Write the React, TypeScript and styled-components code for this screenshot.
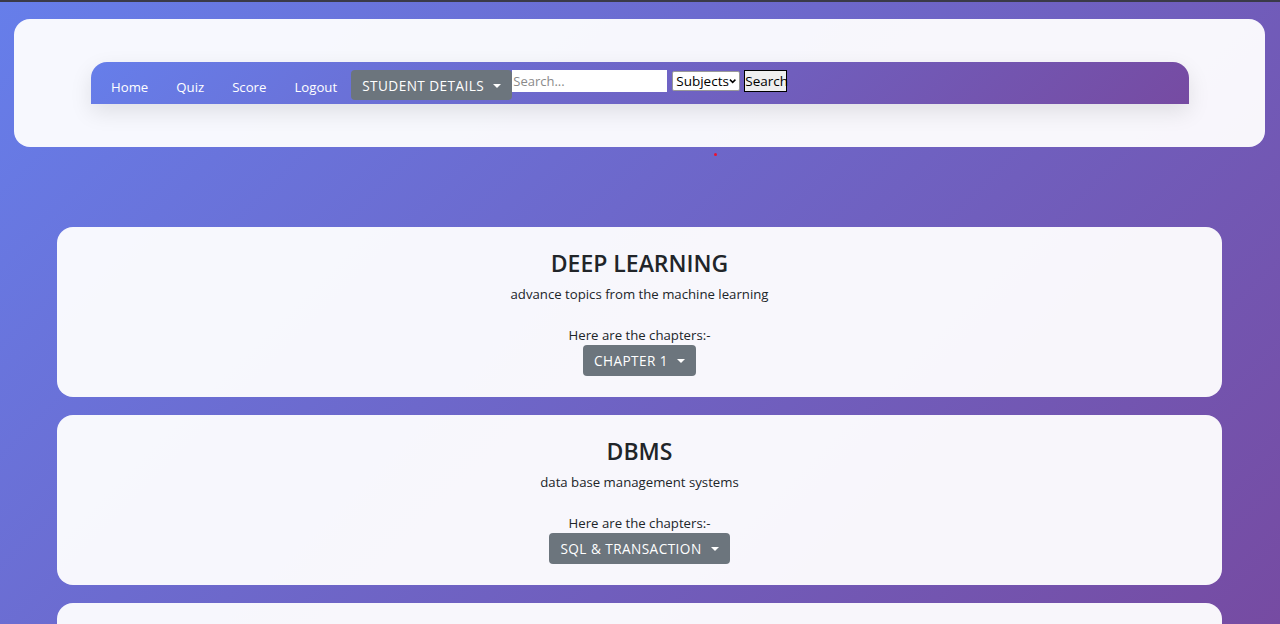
import React from "react";
import styled, { createGlobalStyle } from "styled-components";

const Global = createGlobalStyle`
  html, body { margin: 0; padding: 0; }
  body {
    font-family: "Open Sans", "Noto Sans", sans-serif;
    background: #3a3a48;
  }
  * { box-sizing: border-box; }
`;

const Page = styled.div`
  margin-top: 2px;
  background: linear-gradient(135deg, #667eea 0%, #764ba2 100%);
  padding: 17px 15px 0 14px;
  overflow: hidden;
  height: 622px;
`;

const HeaderCard = styled.div`
  background: rgba(255, 255, 255, 0.95);
  border-radius: 16px;
  height: 128px;
  padding: 43px 76px 0 77px;
`;

const NavBar = styled.nav`
  height: 42px;
  border-radius: 16px 16px 0 0;
  background: linear-gradient(135deg, #667eea 0%, #764ba2 100%);
  box-shadow: 0 8px 22px rgba(0, 0, 0, 0.1);
  display: flex;
  align-items: flex-start;
  padding: 8px 0 0 6px;
`;

const NavLink = styled.a`
  color: #fff;
  font-size: 13.2px;
  line-height: 21px;
  padding: 7px 14px 0;
  text-decoration: none;
`;

const Caret = styled.span`
  display: inline-block;
  width: 0;
  height: 0;
  border-left: 4px solid transparent;
  border-right: 4px solid transparent;
  border-top: 4px solid #fff;
  margin-left: 9px;
  vertical-align: 3px;
`;

const DropButton = styled.button<{ $h?: number }>`
  background: #6c757d;
  color: #fff;
  border: none;
  border-radius: 4px;
  font-family: "Open Sans", "Noto Sans", sans-serif;
  font-size: 13.6px;
  letter-spacing: 0.45px;
  text-transform: uppercase;
  height: ${(p) => p.$h ?? 30}px;
  padding: 0 11px;
  white-space: nowrap;
`;

const SearchInput = styled.input`
  width: 155px;
  height: 22px;
  border: none;
  padding: 0 1px;
  font-family: "Open Sans", sans-serif;
  font-size: 13px;
  &::placeholder { color: #8a8a8a; }
  outline: none;
`;

const Select = styled.div`
  margin: 1px 0 0 5px;
  width: 68px;
  height: 20px;
  background: #fff;
  border: 1px solid #999;
  border-radius: 2px;
  font-size: 13.5px;
  line-height: 18px;
  padding: 0 3px;
  color: #000;
  display: flex;
  align-items: center;
  justify-content: space-between;
`;

const SearchBtn = styled.button`
  margin-left: 4px;
  height: 22px;
  width: 43px;
  padding: 0;
  background: #efefef;
  border: 1px solid #000;
  font-family: "Open Sans", sans-serif;
  font-size: 13.5px;
  color: #000;
`;

const Dot = styled.div`
  width: 3px;
  height: 3px;
  border-radius: 50%;
  background: #ee1030;
  margin: 6px 0 0 700px;
`;

const Cards = styled.div`
  display: flex;
  flex-direction: column;
  gap: 18px;
  margin: 71px 43px 0 43px;
`;

const Card = styled.div`
  background: rgba(255, 255, 255, 0.95);
  border-radius: 16px;
  height: 170px;
  display: flex;
  flex-direction: column;
  align-items: center;
  padding-top: 21px;
  color: #212529;
`;

const Title = styled.h2`
  margin: 0;
  font-size: 23px;
  font-weight: 600;
  line-height: 30px;
`;

const Desc = styled.p`
  margin: 6px 0 0;
  font-size: 13.2px;
  line-height: 20px;
`;

const Here = styled.p`
  margin: 22px 0 0;
  font-size: 13.2px;
  line-height: 19px;
`;

const Chevron = () => (
  <svg width="8" height="6" viewBox="0 0 8 6">
    <path d="M1 1.5 L4 4.5 L7 1.5" stroke="#000" strokeWidth="1.6" fill="none" />
  </svg>
);

const subjects = [
  { title: "DEEP LEARNING", desc: "advance topics from the machine learning", chapter: "Chapter 1" },
  { title: "DBMS", desc: "data base management systems", chapter: "SQL & Transaction" },
];

export default function App() {
  return (
    <>
      <Global />
      <Page>
        <HeaderCard>
          <NavBar>
            <NavLink>Home</NavLink>
            <NavLink>Quiz</NavLink>
            <NavLink>Score</NavLink>
            <NavLink>Logout</NavLink>
            <DropButton>
              Student Details<Caret />
            </DropButton>
            <SearchInput placeholder="Search..." />
            <Select>
              <span>Subjects</span>
              <Chevron />
            </Select>
            <SearchBtn>Search</SearchBtn>
          </NavBar>
        </HeaderCard>
        <Dot />
        <Cards>
          {subjects.map((s) => (
            <Card key={s.title}>
              <Title>{s.title}</Title>
              <Desc>{s.desc}</Desc>
              <Here>Here are the chapters:-</Here>
              <DropButton $h={31}>
                {s.chapter}
                <Caret />
              </DropButton>
            </Card>
          ))}
          <Card />
        </Cards>
      </Page>
    </>
  );
}
